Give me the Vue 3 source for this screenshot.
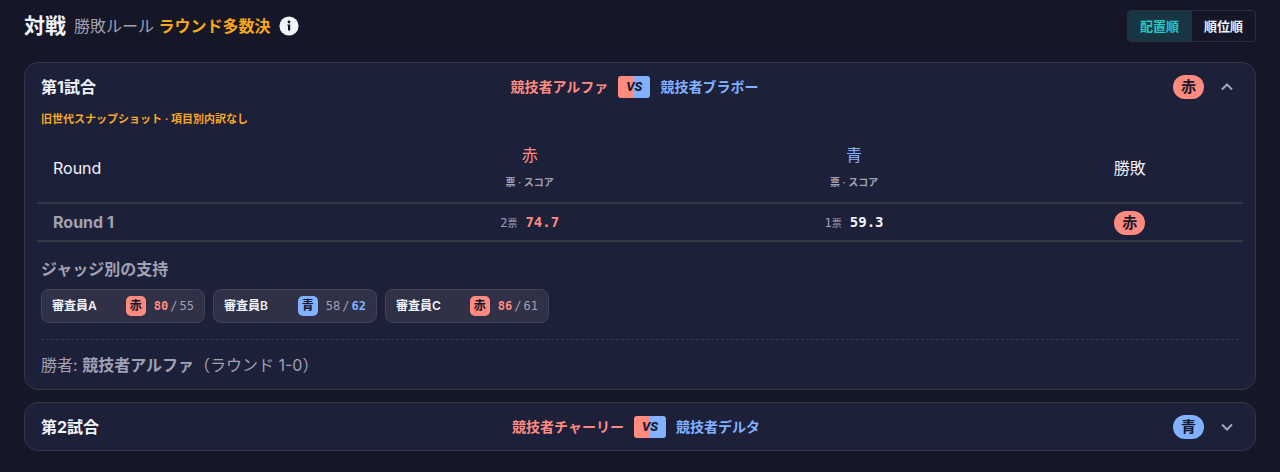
<script setup>
import { ref } from 'vue'

const order = ref('placement')
const orders = [
  { id: 'placement', label: '配置順' },
  { id: 'rank', label: '順位順' },
]

const sideLabel = { red: '赤', blue: '青' }

const matches = ref([
  {
    id: 1,
    title: '第1試合',
    red: '競技者アルファ',
    blue: '競技者ブラボー',
    winner: 'red',
    open: true,
    note: '旧世代スナップショット · 項目別内訳なし',
    rounds: [
      { name: 'Round 1', redVotes: 2, red: '74.7', blueVotes: 1, blue: '59.3', winner: 'red' },
    ],
    judges: [
      { name: '審査員A', pick: 'red', red: 80, blue: 55 },
      { name: '審査員B', pick: 'blue', red: 58, blue: 62 },
      { name: '審査員C', pick: 'red', red: 86, blue: 61 },
    ],
    result: { name: '競技者アルファ', detail: '（ラウンド 1-0）' },
  },
  {
    id: 2,
    title: '第2試合',
    red: '競技者チャーリー',
    blue: '競技者デルタ',
    winner: 'blue',
    open: false,
  },
])
</script>

<template>
  <main class="page">
    <header class="top">
      <h1>対戦</h1>
      <p class="rule">勝敗ルール <strong>ラウンド多数決</strong></p>
      <button class="info" type="button" aria-label="勝敗ルールの説明">
        <svg viewBox="0 0 20 20" width="20" height="20" aria-hidden="true">
          <circle cx="10" cy="10" r="9.6" fill="#f1f3fb" />
          <circle cx="10" cy="6" r="1.4" fill="#151728" />
          <path d="M8.4 8.6h2.8v6H9v-4.8h-.6z" fill="#151728" />
        </svg>
      </button>
      <div class="switch" role="group">
        <button
          v-for="o in orders"
          :key="o.id"
          type="button"
          :class="{ active: order === o.id }"
          :aria-pressed="order === o.id"
          @click="order = o.id"
        >{{ o.label }}</button>
      </div>
    </header>

    <section v-for="m in matches" :key="m.id" class="card">
      <button class="head" type="button" :aria-expanded="m.open" @click="m.open = !m.open">
        <span class="title">{{ m.title }}</span>
        <span class="pair">
          <span class="red">{{ m.red }}</span>
          <span class="vs">VS</span>
          <span class="blue">{{ m.blue }}</span>
        </span>
        <span class="pill" :class="m.winner">{{ sideLabel[m.winner] }}</span>
        <svg class="chevron" viewBox="0 0 16 16" width="16" height="16" aria-hidden="true">
          <path :d="m.open ? 'M3 10.5l5-5 5 5' : 'M3 5.5l5 5 5-5'" />
        </svg>
      </button>

      <div v-if="m.open && m.rounds" class="body">
        <p class="note">{{ m.note }}</p>

        <table>
          <thead>
            <tr>
              <th class="name" scope="col">Round</th>
              <th scope="col"><span class="red">赤</span><small>票 · スコア</small></th>
              <th scope="col"><span class="blue">青</span><small>票 · スコア</small></th>
              <th class="outcome" scope="col">勝敗</th>
            </tr>
          </thead>
          <tbody>
            <tr v-for="r in m.rounds" :key="r.name">
              <th class="name" scope="row">{{ r.name }}</th>
              <td>
                <span class="votes">{{ r.redVotes }}<small>票</small></span>
                <b class="score" :class="{ red: r.winner === 'red' }">{{ r.red }}</b>
              </td>
              <td>
                <span class="votes">{{ r.blueVotes }}<small>票</small></span>
                <b class="score" :class="{ blue: r.winner === 'blue' }">{{ r.blue }}</b>
              </td>
              <td><span class="pill" :class="r.winner">{{ sideLabel[r.winner] }}</span></td>
            </tr>
          </tbody>
        </table>

        <h2>ジャッジ別の支持</h2>
        <ul class="judges">
          <li v-for="j in m.judges" :key="j.name">
            <span class="judge">{{ j.name }}</span>
            <span class="pick" :class="j.pick">{{ sideLabel[j.pick] }}</span>
            <span class="points">
              <span :class="{ won: j.pick === 'red', red: j.pick === 'red' }">{{ j.red }}</span>
              <i>/</i>
              <span :class="{ won: j.pick === 'blue', blue: j.pick === 'blue' }">{{ j.blue }}</span>
            </span>
          </li>
        </ul>

        <p class="result">勝者: <strong>{{ m.result.name }}</strong>{{ m.result.detail }}</p>
      </div>
    </section>
  </main>
</template>

<style>
body {
  background: #151728;
}
</style>

<style scoped>
.page {
  box-sizing: border-box;
  padding: 10px 24px 20px;
  color: #f1f3fb;
  font-family: Inter, "Noto Sans CJK JP", sans-serif;
  font-size: 16px;
  line-height: 24px;
}
button {
  font: inherit;
  color: inherit;
  border: 0;
  padding: 0;
  background: none;
  cursor: pointer;
}
h1, h2, p, ul {
  margin: 0;
  padding: 0;
}
.red { color: #ff8a80; }
.blue { color: #82b1ff; }

.top {
  display: flex;
  align-items: center;
  gap: 8px;
  margin-bottom: 20px;
}
h1 {
  font-size: 21px;
  font-weight: 600;
}
.rule { color: #a1a1b3; }
.rule strong { color: #f9a814; font-weight: 600; }
.info { display: flex; }
.switch {
  display: flex;
  margin-left: auto;
  border: 1px solid #2d2f40;
  border-radius: 4px;
  overflow: hidden;
}
.switch button {
  padding: 3px 12px;
  font-size: 13px;
  font-weight: 600;
}
.switch button + button { border-left: 1px solid #2d2f40; }
.switch .active {
  background: #183544;
  color: #26c9c3;
}

.card {
  margin-bottom: 12px;
  border: 1px solid #34364a;
  border-radius: 14px;
  background: #1d2039;
}
.head {
  display: flex;
  align-items: center;
  width: 100%;
  padding: 12px 20px 11px 16px;
  text-align: left;
}
.title { font-weight: 700; }
.pair {
  flex: 1;
  display: flex;
  justify-content: center;
  align-items: center;
  gap: 10px;
  font-size: 14px;
  font-weight: 600;
}
.vs {
  padding: 0 8px;
  border-radius: 3px;
  background: linear-gradient(90deg, #ff8a80 50%, #82b1ff 50%);
  color: #151728;
  font-family: Roboto, sans-serif;
  font-size: 13px;
  line-height: 22px;
  font-style: italic;
  font-weight: 800;
}
.pill {
  display: inline-block;
  padding: 0 8px;
  border-radius: 12px;
  color: #151728;
  font-size: 15px;
  font-weight: 600;
  line-height: 24px;
}
.pill.red, .pick.red { background: #ff8a80; color: #151728; }
.pill.blue, .pick.blue { background: #82b1ff; color: #151728; }
.chevron { margin-left: 15px; }
.chevron path {
  fill: none;
  stroke: #a6a7b6;
  stroke-width: 2;
}

.body { padding: 0 12px 12px; }
.note {
  margin: 0 4px;
  color: #f9a825;
  font-size: 11px;
  font-weight: 600;
  line-height: 18px;
}
table {
  width: 100%;
  margin-top: 6px;
  border-collapse: collapse;
  table-layout: fixed;
}
th, td {
  box-sizing: border-box;
  padding: 0 16px;
  border-bottom: 2px solid #363644;
  text-align: center;
  font-weight: 400;
}
thead th { height: 69px; width: 26.9%; }
thead .name { width: auto; }
thead .outcome { width: 18.8%; }
thead small {
  display: block;
  padding-top: 3px;
  color: #a1a1b3;
  font-size: 10px;
  font-weight: 600;
}
.name { text-align: left; }
tbody th, tbody td { height: 38px; }
tbody .name { color: #a1a1b3; font-weight: 700; }
.votes, .score, .points {
  font-family: "DejaVu Sans Mono", "Noto Sans CJK JP", monospace;
}
.votes {
  margin-right: 8px;
  color: #a1a1b3;
  font-size: 12px;
}
.votes small { font-size: 10px; }
.score { font-size: 14px; font-weight: 700; }

h2 {
  margin: 15px 4px 0;
  color: #a1a1b3;
  font-size: 16px;
  font-weight: 600;
}
.judges {
  display: flex;
  flex-wrap: wrap;
  gap: 8px;
  margin: 8px 4px 0;
  list-style: none;
}
.judges li {
  box-sizing: border-box;
  display: flex;
  align-items: center;
  width: 164px;
  padding: 4px 10px;
  border: 1px solid #414358;
  border-radius: 8px;
  background: #303147;
}
.judge { font-size: 12px; font-weight: 600; }
.pick {
  margin-left: auto;
  width: 20px;
  border-radius: 5px;
  font-size: 12px;
  line-height: 20px;
  font-weight: 600;
  text-align: center;
}
.points {
  display: flex;
  gap: 2px;
  margin-left: 8px;
  color: #a1a1b3;
  font-size: 12px;
}
.points i { font-style: normal; }
.won { font-weight: 700; }
.result {
  margin: 16px 4px 0;
  padding-top: 13px;
  border-top: 1px dashed #34364a;
  color: #a1a1b3;
}
.result strong { font-weight: 600; }
</style>
